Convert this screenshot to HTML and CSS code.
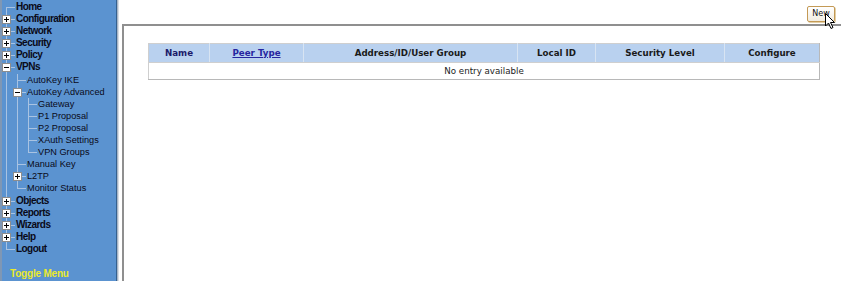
FILE: index.html
```html
<!DOCTYPE html>
<html>
<head>
<meta charset="utf-8">
<link rel="stylesheet" href="styles.css">
</head>
<body>
<div class="app">
  <nav class="side">
    <div class="tree">
      <div class="row top"><span class="c f"></span><span class="lbl">Home</span></div>
      <div class="row top"><span class="c t"><i class="box plus"></i></span><span class="lbl">Configuration</span></div>
      <div class="row top"><span class="c t"><i class="box plus"></i></span><span class="lbl">Network</span></div>
      <div class="row top"><span class="c t"><i class="box plus"></i></span><span class="lbl">Security</span></div>
      <div class="row top"><span class="c t"><i class="box plus"></i></span><span class="lbl">Policy</span></div>
      <div class="row top"><span class="c t"><i class="box minus"></i></span><span class="lbl">VPNs</span></div>
      <div class="row"><span class="c v"></span><span class="c t"></span><span class="lbl">AutoKey IKE</span></div>
      <div class="row"><span class="c v"></span><span class="c t"><i class="box minus"></i></span><span class="lbl">AutoKey Advanced</span></div>
      <div class="row"><span class="c v"></span><span class="c v"></span><span class="c t"></span><span class="lbl">Gateway</span></div>
      <div class="row"><span class="c v"></span><span class="c v"></span><span class="c t"></span><span class="lbl">P1 Proposal</span></div>
      <div class="row"><span class="c v"></span><span class="c v"></span><span class="c t"></span><span class="lbl">P2 Proposal</span></div>
      <div class="row"><span class="c v"></span><span class="c v"></span><span class="c t"></span><span class="lbl">XAuth Settings</span></div>
      <div class="row"><span class="c v"></span><span class="c v"></span><span class="c l"></span><span class="lbl">VPN Groups</span></div>
      <div class="row"><span class="c v"></span><span class="c t"></span><span class="lbl">Manual Key</span></div>
      <div class="row"><span class="c v"></span><span class="c t"><i class="box plus"></i></span><span class="lbl">L2TP</span></div>
      <div class="row"><span class="c v"></span><span class="c l"></span><span class="lbl">Monitor Status</span></div>
      <div class="row top"><span class="c t"><i class="box plus"></i></span><span class="lbl">Objects</span></div>
      <div class="row top"><span class="c t"><i class="box plus"></i></span><span class="lbl">Reports</span></div>
      <div class="row top"><span class="c t"><i class="box plus"></i></span><span class="lbl">Wizards</span></div>
      <div class="row top"><span class="c t"><i class="box plus"></i></span><span class="lbl">Help</span></div>
      <div class="row top"><span class="c l"></span><span class="lbl">Logout</span></div>
    </div>
    <div class="toggle">Toggle Menu</div>
  </nav>
  <main class="main">
    <div class="bar">
      <span class="newbtn">New</span>
      <svg class="cursor" width="11" height="17" viewBox="0 0 11 17"><path d="M0.5 0.5 L0.5 13 L3.5 10 L6 15.5 L8 14.5 L5.5 9.5 L9.5 9.5 Z" fill="#fff" stroke="#000" stroke-width="1"/></svg>
    </div>
    <section class="panel">
      <table class="grid">
        <thead>
          <tr>
            <th class="cn">Name</th>
            <th class="cp"><a href="#">Peer Type</a></th>
            <th class="ca">Address/ID/User Group</th>
            <th class="cl">Local ID</th>
            <th class="cs">Security Level</th>
            <th class="cc">Configure</th>
          </tr>
        </thead>
        <tbody>
          <tr><td colspan="6">No entry available</td></tr>
        </tbody>
      </table>
    </section>
  </main>
</div>
</body>
</html>
```

FILE: styles.css
```css
html, body {
  margin: 0;
  padding: 0;
  height: 100%;
  background: #fff;
}
.app {
  display: flex;
  height: 281px;
  overflow: hidden;
}
.side {
  width: 114px;
  flex: none;
  background: #5b93d0;
  border-left: 2px solid #7f97b4;
  border-right: 1px solid #35618f;
  box-shadow: 1px 0 0 #a9b5c4, 2px 0 0 #d8dde4;
  display: flex;
  flex-direction: column;
  padding-top: 1px;
  font-family: "Liberation Sans", Arial, sans-serif;
  color: #0a0a18;
}
.tree {
  display: flex;
  flex-direction: column;
}
.row {
  display: flex;
  height: 12.1px;
  align-items: stretch;
  font-size: 9.2px;
  line-height: 12px;
  white-space: nowrap;
}
.row.top {
  font-weight: bold;
  font-size: 10px;
  letter-spacing: -0.55px;
}
.lbl {
  padding-left: 3px;
}
.c {
  width: 11px;
  flex: none;
  position: relative;
}
.c.v::before,
.c.t::before,
.c.l::before,
.c.f::before {
  content: "";
  position: absolute;
  left: 4px;
  width: 1px;
  background: #a9c3e2;
}
.c.v::before, .c.t::before { top: 0; bottom: 0; }
.c.l::before { top: 0; height: 6px; }
.c.f::before { top: 6px; bottom: 0; }
.c.t::after,
.c.l::after,
.c.f::after {
  content: "";
  position: absolute;
  left: 4px;
  right: -2px;
  top: 6px;
  height: 1px;
  background: #a9c3e2;
}
.box {
  position: absolute;
  left: 0;
  top: 2px;
  width: 7px;
  height: 7px;
  background: #fff;
  border: 1px solid #8c8c8c;
  z-index: 1;
}
.box::before {
  content: "";
  position: absolute;
  left: 1px;
  right: 1px;
  top: 3px;
  height: 1px;
  background: #000;
}
.box.plus::after {
  content: "";
  position: absolute;
  top: 1px;
  bottom: 1px;
  left: 3px;
  width: 1px;
  background: #000;
}
.toggle {
  margin-top: 13px;
  padding-left: 8px;
  font-weight: bold;
  font-size: 10px;
  line-height: 12px;
  letter-spacing: -0.2px;
  color: #eaea2c;
}
.main {
  flex: 1;
  display: flex;
  flex-direction: column;
  margin-left: 5px;
  min-width: 0;
}
.bar {
  height: 24px;
  display: flex;
  justify-content: flex-end;
  align-items: flex-start;
  position: relative;
  padding-right: 6px;
  box-sizing: border-box;
}
.newbtn {
  margin-top: 6px;
  width: 26px;
  height: 14px;
  border: 1px solid #c49a55;
  border-radius: 2px;
  background: linear-gradient(#ffffff, #f1ece0);
  box-shadow: 1px 1px 0 #e3cfa6;
  font-family: "DejaVu Sans", Verdana, sans-serif;
  font-size: 8px;
  line-height: 14px;
  text-align: center;
  color: #111;
}
.cursor {
  position: absolute;
  right: 5px;
  top: 13px;
}
.panel {
  flex: 1;
  border-top: 2px solid #8f8f8f;
  border-left: 2px solid #8f8f8f;
  padding: 17px 19px 0 24px;
}
.grid {
  width: 672px;
  border-collapse: collapse;
  font-family: "DejaVu Sans", Verdana, sans-serif;
  font-size: 8.7px;
  border: 1px solid #cfcfcf;
  border-right-color: #b8b8b8;
  border-bottom-color: #b8b8b8;
}
.grid th {
  background: #b9d1ef;
  height: 18px;
  padding: 0;
  font-weight: bold;
  color: #1a1a1a;
  border-right: 1px solid #d8e4f2;
  border-bottom: 1px solid #cfcfcf;
}
.grid th:last-child { border-right: none; }
.grid th.cn { width: 60px; color: #1b1b6a; }
.grid th.cp { width: 93px; }
.grid th.cp a { color: #2525a0; text-decoration: underline; }
.grid th.ca { width: 213px; }
.grid th.cl { width: 77px; }
.grid th.cs { width: 128px; }
.grid td {
  height: 16px;
  padding: 0;
  text-align: center;
  color: #222;
}
```
